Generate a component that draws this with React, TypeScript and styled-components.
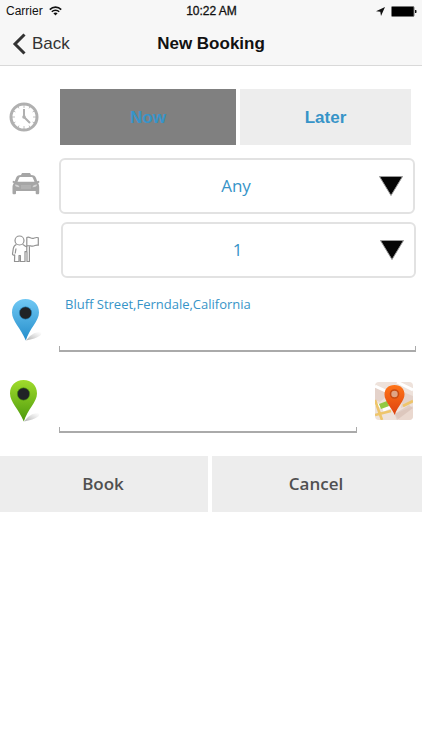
import React, { useState } from "react";
import styled, { createGlobalStyle } from "styled-components";

const GlobalStyle = createGlobalStyle`
  *, *::before, *::after { box-sizing: border-box; }
  body {
    margin: 0;
    background: #fff;
    font-family: "Open Sans", "Noto Sans", sans-serif;
  }
  button, select, textarea { font-family: inherit; margin: 0; border-radius: 0; }
`;

const Screen = styled.main`
  display: flex;
  flex-direction: column;
  min-height: 100vh;
  background: #fff;
`;

const Header = styled.header`
  background: #f7f7f7;
  border-bottom: 1px solid #d9d9d9;
  font-family: "Liberation Sans", Arial, sans-serif;
`;

const StatusBar = styled.div`
  display: grid;
  grid-template-columns: 1fr auto 1fr;
  align-items: center;
  height: 22px;
  padding: 0 5px 0 6px;
  font-size: 12px;
  color: #111;
`;

const StatusGroup = styled.div<{ $end?: boolean }>`
  display: flex;
  align-items: center;
  gap: 6px;
  justify-content: ${(p) => (p.$end ? "flex-end" : "flex-start")};
`;

const Clock = styled.span`
  font-size: 12px;
  -webkit-text-stroke: 0.3px currentColor;
`;

const NavBar = styled.nav`
  display: grid;
  grid-template-columns: 1fr auto 1fr;
  align-items: center;
  height: 43px;
  padding: 0 12px;
`;

const BackButton = styled.button`
  display: flex;
  align-items: center;
  justify-self: start;
  gap: 6px;
  padding: 0;
  border: 0;
  background: none;
  color: #333;
  font-size: 17px;
`;

const Title = styled.h1`
  margin: 0;
  font-size: 17px;
  font-weight: 700;
  color: #111;
`;

const Form = styled.form`
  display: flex;
  flex-direction: column;
`;

const Fields = styled.div`
  display: flex;
  flex-direction: column;
  gap: 8px;
  padding: 23px 6px 23px 0;
`;

const Row = styled.div<{ $after?: number }>`
  display: grid;
  grid-template-columns: 60px minmax(0, 1fr);
  align-items: center;
  margin-bottom: ${(p) => p.$after ?? 0}px;
`;

const IconCell = styled.span`
  display: flex;
  padding-left: 8px;
`;

const Segments = styled.div`
  display: grid;
  grid-template-columns: 176fr 171fr;
  gap: 4px;
  padding-right: 5px;
`;

const Segment = styled.button<{ $active: boolean }>`
  height: 56px;
  padding: 2px 0 0;
  border: 0;
  background: ${(p) => (p.$active ? "#808080" : "#ededed")};
  color: #3794c8;
  font-family: "Liberation Sans", Arial, sans-serif;
  font-size: 17px;
  font-weight: 700;
`;

const SelectBox = styled.div<{ $start?: number; $end?: number }>`
  position: relative;
  margin-left: ${(p) => p.$start ?? 0}px;
  margin-right: ${(p) => p.$end ?? 0}px;
`;

const Select = styled.select`
  display: block;
  appearance: none;
  width: 100%;
  height: 56px;
  padding: 0 2px 2px 0;
  border: 2px solid #e2e2e2;
  border-radius: 6px;
  background: #fff;
  color: #3794c8;
  font-size: 17px;
  text-align: center;
  text-align-last: center;
`;

const Arrow = styled.svg`
  position: absolute;
  top: 50%;
  right: 12px;
  transform: translateY(-50%);
  pointer-events: none;
`;

const AddressLine = styled.div`
  display: flex;
  align-items: center;
  gap: 18px;
`;

const AddressBox = styled.div`
  position: relative;
  flex: 1;
  min-width: 0;
  margin-left: -1px;

  &::after {
    content: "";
    position: absolute;
    inset: auto 0 0 0;
    height: 6px;
    border: solid #aaa;
    border-width: 0 1px 2px;
    pointer-events: none;
  }
`;

const Address = styled.textarea`
  display: block;
  width: 100%;
  height: 64px;
  padding: 7px 6px 6px;
  border: 0;
  outline: 0;
  resize: none;
  background: transparent;
  color: #3794c8;
  font-size: 13px;
  line-height: 18px;
`;

const MapButton = styled.button`
  display: flex;
  padding: 0;
  border: 0;
  background: none;
  margin-right: 3px;
`;

const Actions = styled.div`
  display: grid;
  grid-template-columns: 208fr 210fr;
  gap: 4px;
`;

const Action = styled.button`
  height: 56px;
  padding: 0 2px 2px 0;
  border: 0;
  background: #ededed;
  color: #505050;
  font-size: 17px;
  font-weight: 600;
`;

const Wifi = () => (
  <svg width="13" height="10" viewBox="0 0 13 10" fill="none" stroke="#111" strokeWidth="1.6" aria-hidden="true">
    <path d="M.8 3.6C4 .3 9 .3 12.2 3.6M2.8 5.8c2.1-2.1 5.3-2.1 7.4 0" />
    <path d="M4.4 7.3c1.2-1.1 3-1.1 4.2 0L6.5 9.6z" fill="#111" stroke="none" />
  </svg>
);

const LocationArrow = () => (
  <svg width="9" height="9" viewBox="0 0 9 9" aria-hidden="true">
    <path d="M9 0 5 9 4.300 4.800 0 4.200z" fill="#111" />
  </svg>
);

const Battery = () => (
  <svg width="26" height="11" viewBox="0 0 26 11" aria-hidden="true">
    <rect x=".5" y=".5" width="22.500" height="10" rx="1" fill="#000" stroke="#777" />
    <path d="M24 4h1.300q.5 1.500 0 3H24z" fill="#111" />
  </svg>
);

const Chevron = () => (
  <svg width="14" height="22" viewBox="0 0 14 22" fill="none" stroke="#333" strokeWidth="3" aria-hidden="true">
    <path d="M12.500 1.500 3 11l9.500 9.500" />
  </svg>
);

const ClockIcon = () => (
  <svg width="32" height="32" viewBox="0 0 32 32" fill="none" stroke="#b0b0b0" aria-hidden="true">
    <circle cx="16" cy="16" r="13" strokeWidth="3" />
    <path d="M16 8v8l6 6" strokeWidth="2" />
    <circle cx="16" cy="16" r="1.800" fill="#b0b0b0" stroke="none" />
    <path d="M16 4v3M16 25v3M4 16h3M25 16h3M10 5.600l1 1.800M22 5.600l-1 1.800M10 26.400l1-1.800M22 26.400l-1-1.800M5.600 10l1.800 1M26.400 10l-1.800 1M5.600 22l1.800-1M26.400 22l-1.800-1" strokeWidth=".8" />
  </svg>
);

const TaxiIcon = () => (
  <svg width="32" height="28" viewBox="0 0 32 28" aria-hidden="true">
    <path
      fill="#a6a6a6"
      fillRule="evenodd"
      d="M14 1h8l1 2c3 .2 4.300 1 5 3l1.200 3.300 1.800-.5.500 1.500-1.300 1c.8 1.200 1 2.500 1 4V21q0 1.200-1 1.200h-1.500q-1 0-1-1V19H8v2.200q0 1-1 1H5.500q-1 0-1-1.200v-5.700c0-1.500.3-2.800 1.300-4l-1.300-1L5 8.800l1.800.5L8 6c.7-2 2-2.800 5-3zM9.500 9.800h17L25 6.200C24.700 5.200 24 5 23 5H13c-1 0-1.700.2-2 1.200z"
    />
    <path d="M7 12.500c0 1.700 1.200 2.500 4.500 2.700-.5-1.700-1.700-2.500-4.500-2.700zM29 12.500c-2.800.2-4 1-4.500 2.700 3.300-.2 4.500-1 4.500-2.700z" fill="#d4d4d4" />
    <path d="M13 14h10M13 16h10" stroke="#c4c4c4" strokeWidth=".8" />
  </svg>
);

const PassengerIcon = () => (
  <svg width="32" height="30" viewBox="0 1 32 30" fill="none" stroke="#929292" strokeWidth="1.200" strokeLinejoin="round" aria-hidden="true">
    <circle cx="11.500" cy="6.500" r="4.500" />
    <path d="M8.500 10.500c-2 .5-2.800 2-3.200 4l-.8 5.500c0 1 1.200 1.500 2.200 1L6.500 27.500h4.500v-6h1.400v6h4.600V17.500l2 .2V27.500h2.400V12.500M18.800 17V3.500c2.500-1.500 4 1.500 6.500.8 2-.6 3-1.300 5-.5v7.500c-2.500-1-3.500 1-6 .8-2-.1-3-.7-5.500-.2M14.500 10.500c1.500.3 2 1.500 4 2.200M8 14.500l-.8 5" />
  </svg>
);

interface PinProps {
  id: string;
  light: string;
  dark: string;
  x: number;
}

const PinIcon = ({ id, light, dark, x }: PinProps) => (
  <svg width="36" height="42" viewBox={`${x} 1 36 42`} aria-hidden="true">
    <defs>
      <linearGradient id={`${id}-fill`} x1="0" y1="0" x2="0" y2="1">
        <stop offset="0" stopColor={light} />
        <stop offset="1" stopColor={dark} />
      </linearGradient>
      <linearGradient id={`${id}-shade`} x1="0" y1="1" x2="1" y2="0">
        <stop offset="0" stopColor="#777" stopOpacity=".6" />
        <stop offset="1" stopColor="#aaa" stopOpacity="0" />
      </linearGradient>
    </defs>
    <path d="M18 42.500c4-5 8-8.500 14-8.500 4 2-1 6-14 8.500z" fill={`url(#${id}-shade)`} />
    <path d="M17.500 1C9.500 1 4 6.500 4 14.500c0 8.500 9 16 13.800 28C21.500 30.500 31 23 31 14.500 31 6.500 25.500 1 17.500 1z" fill={`url(#${id}-fill)`} />
    <circle cx="17.500" cy="15" r="6.200" fill="#202326" stroke={dark} strokeWidth=".6" />
  </svg>
);

const MapIcon = () => (
  <svg width="38" height="38" viewBox="0 0 38 38" aria-hidden="true">
    <defs>
      <clipPath id="map-tile">
        <rect width="38" height="38" rx="4" />
      </clipPath>
      <linearGradient id="map-pin" x1="0" y1="0" x2="0" y2="1">
        <stop offset="0" stopColor="#ff7418" />
        <stop offset="1" stopColor="#dd4210" />
      </linearGradient>
    </defs>
    <g clipPath="url(#map-tile)">
      <rect width="38" height="38" fill="#eee2db" />
      <path d="M0 5 14 12 5 20 0 18zM28 10 38 14v7l-12 5z" fill="#e4d2ca" />
      <path d="M20 32 38 24v14H24z" fill="#ead8cf" />
      <path d="M0 4 15 11M22 0l16 8M8 28 18 24M0 22l10 4" stroke="#fff" strokeWidth="3" fill="none" />
      <path d="M0 33 16 29M28 24 38 19M0 18 7 38" stroke="#eec56b" strokeWidth="2.600" fill="none" />
      <path d="m4 22 8-3 2 5-8 3z" fill="#92c943" />
      <path d="M19.500 32 34 23l4 3-16 12z" fill="#b89486" opacity=".25" />
      <path d="M19.500 3C13 3 9.500 7 9.500 12.500 9.500 19 16 25 19.800 33 22 25 29.500 19 29.500 12.500 29.500 7 26 3 19.500 3z" fill="url(#map-pin)" />
      <circle cx="19.500" cy="12" r="4" fill="#dfa585" stroke="#c94c12" strokeWidth="1.600" />
    </g>
  </svg>
);

const DropArrow = () => (
  <Arrow width="24" height="20" viewBox="0 0 24 20" aria-hidden="true">
    <path d="M.5.500h23L12 19.500z" fill="#050505" stroke="#999" strokeWidth="1" />
  </Arrow>
);

export default function App() {
  const [when, setWhen] = useState("Now");
  const [pickup, setPickup] = useState("Bluff Street,Ferndale,California");
  const [destination, setDestination] = useState("");

  return (
    <Screen>
      <GlobalStyle />
      <Header>
        <StatusBar>
          <StatusGroup>
            <span>Carrier</span>
            <Wifi />
          </StatusGroup>
          <Clock>10:22 AM</Clock>
          <StatusGroup $end>
            <LocationArrow />
            <Battery />
          </StatusGroup>
        </StatusBar>
        <NavBar>
          <BackButton type="button">
            <Chevron />
            Back
          </BackButton>
          <Title>New Booking</Title>
        </NavBar>
      </Header>
      <Form onSubmit={(e) => e.preventDefault()}>
        <Fields>
          <Row $after={5}>
            <IconCell><ClockIcon /></IconCell>
            <Segments role="group" aria-label="Pickup time">
              {["Now", "Later"].map((label) => (
                <Segment
                  key={label}
                  type="button"
                  $active={when === label}
                  aria-pressed={when === label}
                  onClick={() => setWhen(label)}
                >
                  {label}
                </Segment>
              ))}
            </Segments>
          </Row>
          <Row>
            <IconCell><TaxiIcon /></IconCell>
            <SelectBox $start={-1} $end={1}>
              <Select aria-label="Vehicle type" defaultValue="Any">
                <option>Any</option>
              </Select>
              <DropArrow />
            </SelectBox>
          </Row>
          <Row $after={2}>
            <IconCell><PassengerIcon /></IconCell>
            <SelectBox $start={1}>
              <Select aria-label="Passengers" defaultValue="1">
                <option>1</option>
              </Select>
              <DropArrow />
            </SelectBox>
          </Row>
          <Row $after={9}>
            <IconCell><PinIcon id="pickup" light="#70c8f4" dark="#258ecb" x={0} /></IconCell>
            <AddressBox>
              <Address aria-label="Pickup address" value={pickup} onChange={(e) => setPickup(e.target.value)} />
            </AddressBox>
          </Row>
          <Row>
            <IconCell><PinIcon id="destination" light="#a0dc2c" dark="#4c990c" x={2} /></IconCell>
            <AddressLine>
              <AddressBox>
                <Address aria-label="Destination address" value={destination} onChange={(e) => setDestination(e.target.value)} />
              </AddressBox>
              <MapButton type="button" aria-label="Choose on map"><MapIcon /></MapButton>
            </AddressLine>
          </Row>
        </Fields>
        <Actions>
          <Action type="submit">Book</Action>
          <Action type="button">Cancel</Action>
        </Actions>
      </Form>
    </Screen>
  );
}
